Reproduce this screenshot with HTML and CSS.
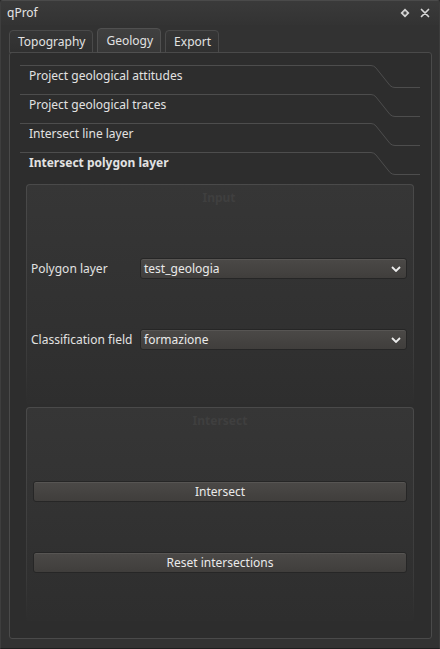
FILE: index.html
```html
<!DOCTYPE html>
<html>
<head>
<meta charset="utf-8">
<link rel="stylesheet" href="styles.css">
</head>
<body>
<div class="window">
  <div class="titlebar">
    <span class="title">qProf</span>
    <div class="title-btns">
      <svg class="tbtn" width="10" height="10" viewBox="0 0 10 10"><polygon points="5,0.5 9.5,5 5,9.5 0.5,5" fill="#d6d6d6"/><circle cx="5" cy="5" r="1.7" fill="#4a4a4a"/></svg>
      <svg class="tbtn" width="10" height="10" viewBox="0 0 10 10"><path d="M1.5 1.5 L8.5 8.5 M8.5 1.5 L1.5 8.5" stroke="#d6d6d6" stroke-width="1.7" stroke-linecap="round"/></svg>
    </div>
  </div>
  <div class="tabbar">
    <div class="tab">Topography</div>
    <div class="tab active">Geology</div>
    <div class="tab">Export</div>
  </div>
  <div class="pane">
    <div class="toolbox">
      <div class="tb-header">
        <svg class="tb-line" width="400" height="24" viewBox="0 0 400 24"><path d="M0 0.5 H351 Q354 0.5 356 3 L370 20.5 Q372 22.5 375 22.5 H400" fill="none" stroke="#4d4d4d" stroke-width="1"/></svg>
        <span class="tb-text">Project geological attitudes</span>
      </div>
      <div class="tb-header">
        <svg class="tb-line" width="400" height="24" viewBox="0 0 400 24"><path d="M0 0.5 H351 Q354 0.5 356 3 L370 20.5 Q372 22.5 375 22.5 H400" fill="none" stroke="#4d4d4d" stroke-width="1"/></svg>
        <span class="tb-text">Project geological traces</span>
      </div>
      <div class="tb-header">
        <svg class="tb-line" width="400" height="24" viewBox="0 0 400 24"><path d="M0 0.5 H351 Q354 0.5 356 3 L370 20.5 Q372 22.5 375 22.5 H400" fill="none" stroke="#4d4d4d" stroke-width="1"/></svg>
        <span class="tb-text">Intersect line layer</span>
      </div>
      <div class="tb-header">
        <svg class="tb-line" width="400" height="24" viewBox="0 0 400 24"><path d="M0 0.5 H351 Q354 0.5 356 3 L370 20.5 Q372 22.5 375 22.5 H400" fill="none" stroke="#4d4d4d" stroke-width="1"/></svg>
        <span class="tb-text bold">Intersect polygon layer</span>
      </div>
      <div class="tb-page">
        <div class="group g-input">
          <div class="group-inner">
            <div class="group-title">Input</div>
            <div class="rows">
              <div class="form-row">
                <span class="label">Polygon layer</span>
                <div class="combo"><span>test_geologia</span><svg width="10" height="6" viewBox="0 0 10 6"><path d="M1 1 L5 5 L9 1" fill="none" stroke="#ececec" stroke-width="1.8"/></svg></div>
              </div>
              <div class="form-row">
                <span class="label">Classification field</span>
                <div class="combo"><span>formazione</span><svg width="10" height="6" viewBox="0 0 10 6"><path d="M1 1 L5 5 L9 1" fill="none" stroke="#ececec" stroke-width="1.8"/></svg></div>
              </div>
            </div>
          </div>
        </div>
        <div class="group g-intersect">
          <div class="group-inner">
            <div class="group-title">Intersect</div>
            <div class="rows">
              <div class="button">Intersect</div>
              <div class="button">Reset intersections</div>
            </div>
          </div>
        </div>
      </div>
    </div>
  </div>
</div>
</body>
</html>
```

FILE: styles.css
```css
* { box-sizing: border-box; }

html, body {
  margin: 0;
  padding: 0;
  background: #2a2a2a;
}

body {
  font-family: "Noto Sans", "DejaVu Sans", sans-serif;
  font-size: 12px;
  color: #e2e2e2;
}

.window {
  width: 440px;
  height: 649px;
  background: #323232;
  border: 1px solid #444;
  border-color: #4a4a4a #3c3c3c #1e1e1e #3e3e3e;
  border-radius: 3px 3px 0 0;
  display: flex;
  flex-direction: column;
}

.titlebar {
  height: 24px;
  flex: none;
  display: flex;
  align-items: center;
  justify-content: space-between;
  padding: 0 9px 1px 6px;
  background: linear-gradient(to bottom, #3a3a3a, #333333);
}

.title {
  font-size: 12px;
  color: #e4e4e4;
  line-height: 16px;
}

.title-btns {
  display: flex;
  gap: 10px;
  align-items: center;
}

.tbtn { display: block; }

.tabbar {
  height: 28px;
  flex: none;
  display: flex;
  align-items: flex-end;
  gap: 4px;
  padding-left: 8px;
  margin-bottom: -1px;
  position: relative;
  z-index: 1;
}

.tab {
  height: 23px;
  padding: 0 7px 0 8px;
  line-height: 21px;
  border: 1px solid #4a4a4a;
  border-radius: 4px 4px 0 0;
  background: linear-gradient(to bottom, #363636, #303030);
  color: #e2e2e2;
}

.tab.active {
  height: 25px;
  line-height: 23px;
  padding: 0 7px 0 8px;
  background: linear-gradient(to bottom, #404040, #383838);
  border-color: #505050;
}

.pane {
  flex: 1;
  margin: 0 7px 9px 8px;
  border: 1px solid #4a4a4a;
  border-radius: 3px;
  background: #2d2d2d;
}

.toolbox {
  padding: 12px 11px 0 10px;
  display: flex;
  flex-direction: column;
}

.tb-header {
  height: 29px;
  display: grid;
}

.tb-line {
  grid-area: 1 / 1;
  display: block;
}

.tb-text {
  grid-area: 1 / 1;
  padding-left: 9px;
  line-height: 21px;
  height: 21px;
  color: #e2e2e2;
}

.tb-text.bold { font-weight: bold; }

.tb-page {
  margin-top: 3px;
  padding: 0 6px;
  display: flex;
  flex-direction: column;
  gap: 3px;
}

.group {
  padding: 1px 1px 0 1px;
  border-radius: 4px 4px 0 0;
  background: linear-gradient(to bottom, #4a4a4a, #3a3a3a 80%, #2d2d2d);
}

.g-input { height: 220px; }
.g-intersect { height: 214px; }

.group-inner {
  height: 100%;
  border-radius: 3px 3px 0 0;
  background: linear-gradient(to bottom, #363636, #2e2e2e);
  padding: 4px 6px 0 4px;
}

.g-intersect .group-inner { padding-left: 6px; }

.group-title {
  height: 18px;
  line-height: 18px;
  text-align: center;
  font-weight: bold;
  color: #3f3f3f;
}

.rows {
  margin-top: 51px;
  display: flex;
  flex-direction: column;
  gap: 50px;
}

.form-row {
  display: grid;
  grid-template-columns: 109px 1fr;
  align-items: center;
  height: 21px;
}

.label {
  color: #e2e2e2;
  line-height: 21px;
}

.combo, .button {
  height: 21px;
  border-radius: 3px;
  border: 1px solid #262626;
  box-shadow: inset 0 1px 0 #575553;
  background: linear-gradient(to bottom, #4b4947, #403e3c);
  color: #eaeaea;
}

.combo {
  display: flex;
  align-items: center;
  justify-content: space-between;
  padding: 0 5px 0 3px;
  line-height: 19px;
}

.combo svg { display: block; }

.button {
  text-align: center;
  line-height: 19px;
}
```
